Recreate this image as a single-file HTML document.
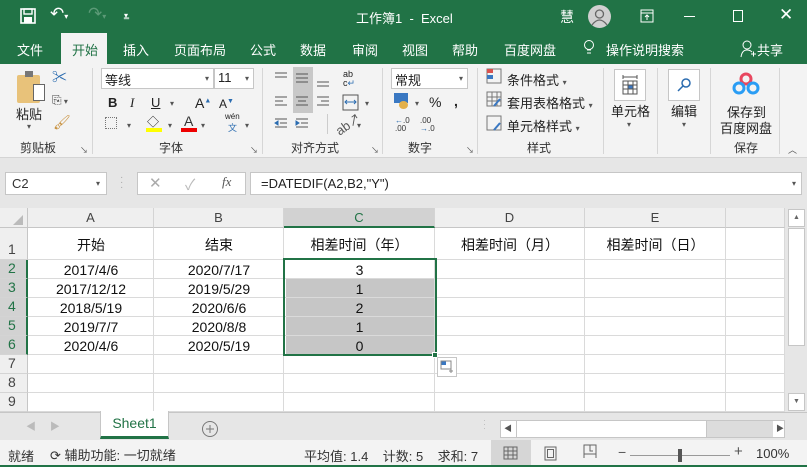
<!DOCTYPE html>
<html><head><meta charset="utf-8"><style>
*{margin:0;padding:0;box-sizing:border-box}
body{width:807px;height:467px;overflow:hidden;font-family:"Liberation Sans","Noto Sans CJK SC",sans-serif;background:#e6e6e6;position:relative;font-size:12px;color:#222}
.a{position:absolute}
.w{color:#fff}
.t{position:absolute;top:40px;color:#fff;font-size:13px}
.lab{position:absolute;top:139px;font-size:12px;color:#333}
.sep{position:absolute;top:68px;width:1px;height:86px;background:#d6d6d6}
.ch{position:absolute;top:208px;height:20px;text-align:center;line-height:20px;font-size:13px;color:#444;border-right:1px solid #d4d4d4;border-bottom:1px solid #c6c6c6;background:#efefef}
.rh{position:absolute;left:0;width:28px;text-align:left;padding-left:8px;font-size:14px;color:#444;background:#efefef;border-bottom:1px solid #d4d4d4;border-right:1px solid #c6c6c6}
.hl{position:absolute;height:1px;background:#dadada;left:28px;width:757px}
.vl{position:absolute;width:1px;background:#dadada;top:228px;height:184px}
.c{position:absolute;text-align:center;font-size:14px;color:#111}
.dd{font-size:8px;color:#555}
</style></head><body>
<!-- title bar -->
<div class="a" style="left:0;top:0;width:807px;height:64px;background:#217346"></div>
<svg class="a" style="left:20px;top:8px" width="16" height="16"><rect x="1" y="1" width="14" height="14" fill="none" stroke="#fff" stroke-width="1.6"/><rect x="4" y="1" width="8" height="5" fill="none" stroke="#fff" stroke-width="1.4"/><rect x="4" y="9" width="8" height="6" fill="#fff"/></svg>
<div class="a w" style="left:50px;top:4px;font-size:17px">↶<span style="font-size:8px">▾</span></div>
<div class="a" style="left:88px;top:4px;font-size:17px;color:#5c9a77">↷<span style="font-size:8px">▾</span></div>
<div class="a w" style="left:124px;top:9px;font-size:9px">‗<br></div>
<div class="a w" style="left:124px;top:11px;font-size:8px">▾</div>
<div class="a w" style="left:356px;top:8px;font-size:13px">工作簿1&nbsp; -&nbsp; Excel</div>
<div class="a w" style="left:560px;top:7px;font-size:14px">慧</div>
<div class="a" style="left:588px;top:5px;width:23px;height:23px;border-radius:50%;background:#d0d0d0"></div>
<svg class="a" style="left:588px;top:5px" width="23" height="23"><circle cx="11.5" cy="9" r="4" fill="none" stroke="#666" stroke-width="1.3"/><path d="M4 20 Q11.5 10 19 20" fill="none" stroke="#666" stroke-width="1.3"/></svg>
<svg class="a" style="left:640px;top:9px" width="14" height="14"><rect x="1" y="1" width="12" height="12" fill="none" stroke="#fff"/><path d="M1 4H13M7 6V11M5 8L7 6L9 8" stroke="#fff" fill="none"/></svg>
<div class="a" style="left:684px;top:16px;width:11px;height:1px;background:#fff"></div>
<div class="a" style="left:733px;top:10px;width:10px;height:12px;border:1px solid #fff"></div>
<div class="a w" style="left:779px;top:5px;font-size:17px">✕</div>
<!-- tabs -->
<div class="t" style="left:17px">文件</div>
<div class="a" style="left:61px;top:33px;width:46px;height:32px;background:#f3f3f3"></div>
<div class="t" style="left:72px;color:#217346">开始</div>
<div class="t" style="left:123px">插入</div>
<div class="t" style="left:174px">页面布局</div>
<div class="t" style="left:250px">公式</div>
<div class="t" style="left:300px">数据</div>
<div class="t" style="left:352px">审阅</div>
<div class="t" style="left:402px">视图</div>
<div class="t" style="left:452px">帮助</div>
<div class="t" style="left:504px">百度网盘</div>
<svg class="a" style="left:583px;top:39px" width="12" height="18"><circle cx="6" cy="6" r="4.5" fill="none" stroke="#fff"/><path d="M4 11H8M4 14H8" stroke="#fff"/></svg>
<div class="t" style="left:606px">操作说明搜索</div>
<svg class="a" style="left:740px;top:40px" width="16" height="18"><circle cx="7" cy="5" r="4" fill="none" stroke="#fff"/><path d="M1 17Q2 10 7 10Q10 10 12 12M11 14H16M13.5 11.5V16.5" stroke="#fff" fill="none"/></svg>
<div class="t" style="left:757px">共享</div>
<!-- ribbon -->
<div class="a" style="left:0;top:64px;width:807px;height:94px;background:#f3f3f3;border-bottom:1px solid #d4d4d4"></div>
<div class="sep" style="left:92px"></div><div class="sep" style="left:262px"></div><div class="sep" style="left:382px"></div><div class="sep" style="left:477px"></div><div class="sep" style="left:603px"></div><div class="sep" style="left:657px"></div><div class="sep" style="left:710px"></div><div class="sep" style="left:779px"></div>
<!-- clipboard -->
<div class="a" style="left:17px;top:75px;width:23px;height:28px;background:#e8c27a;border-radius:2px"></div>
<div class="a" style="left:25px;top:71px;width:8px;height:6px;background:#777"></div>
<div class="a" style="left:33px;top:84px;width:12px;height:17px;background:#fff;border:1px solid #666"></div>
<div class="a" style="left:16px;top:104px;font-size:13px">粘贴</div>
<div class="a dd" style="left:27px;top:122px">▾</div>
<div class="a" style="left:52px;top:66px;font-size:15px;color:#2b6cb0">✂</div>
<div class="a" style="left:52px;top:93px;font-size:12px;color:#444">⎘<span class="dd"> ▾</span></div>
<div class="a" style="left:53px;top:114px;font-size:14px;color:#c8903c">🖌</div>
<div class="lab" style="left:20px">剪贴板</div><div class="a dd" style="left:80px;top:145px">↘</div>
<!-- font -->
<div class="a" style="left:101px;top:68px;width:113px;height:21px;background:#fff;border:1px solid #c6c6c6;font-size:13px;padding:1px 3px">等线<span class="dd a" style="right:4px;top:5px">▾</span></div>
<div class="a" style="left:214px;top:68px;width:40px;height:21px;background:#fff;border:1px solid #c6c6c6;font-size:13px;padding:1px 3px">11<span class="dd a" style="right:4px;top:5px">▾</span></div>
<div class="a" style="left:108px;top:95px;font-weight:bold;font-size:13px">B</div>
<div class="a" style="left:130px;top:95px;font-style:italic;font-size:13px;font-family:'Liberation Serif'">I</div>
<div class="a" style="left:151px;top:95px;text-decoration:underline;font-size:13px">U</div><div class="a dd" style="left:170px;top:99px">▾</div>
<div class="a" style="left:195px;top:95px;font-size:14px">A<sup style="font-size:7px;color:#2b6cb0">▲</sup></div>
<div class="a" style="left:219px;top:97px;font-size:12px">A<sup style="font-size:7px;color:#2b6cb0">▼</sup></div>
<div class="a" style="left:105px;top:117px;width:12px;height:12px;border:1px dotted #777"></div><div class="a dd" style="left:127px;top:121px">▾</div>
<div class="a" style="left:147px;top:113px;font-size:12px">◇</div><div class="a" style="left:146px;top:128px;width:16px;height:4px;background:#ff0"></div><div class="a dd" style="left:168px;top:121px">▾</div>
<div class="a" style="left:184px;top:113px;font-size:14px;color:#333">A</div><div class="a" style="left:181px;top:128px;width:16px;height:4px;background:#e00"></div><div class="a dd" style="left:201px;top:121px">▾</div>
<div class="a" style="left:225px;top:112px;font-size:8px">wén<br><span style="font-size:9px;color:#2b6cb0;padding-left:3px">文</span></div><div class="a dd" style="left:245px;top:121px">▾</div>
<div class="lab" style="left:159px">字体</div><div class="a dd" style="left:250px;top:145px">↘</div>
<!-- align -->
<div class="a" style="left:293px;top:67px;width:20px;height:46px;background:#c8c8c8"></div>
<svg class="a" style="left:272px;top:70px" width="60" height="62" stroke="#555" fill="none"><path d="M3 3H15M3 7H15M24 4H36M24 8H36M24 12H36M45 12H57M45 16H57M3 27H15M3 31H11M3 35H15M24 27H36M26 31H34M24 35H36M45 27H57M49 31H57M45 35H57"/><path d="M3 49H15M8 53H15M3 57H15" /><path d="M3 53L6 51V55Z" fill="#2b6cb0" stroke="#2b6cb0"/><path d="M24 49H36M29 53H36M24 57H36"/><path d="M24 51L27 53L24 55Z" fill="#2b6cb0" stroke="#2b6cb0"/></svg>
<div class="a" style="left:343px;top:70px;font-size:9px;line-height:9px">ab<br>c<span style="color:#2b6cb0">↵</span></div>
<svg class="a" style="left:342px;top:94px" width="20" height="18"><rect x="1" y="1" width="15" height="15" fill="none" stroke="#555"/><path d="M3 8H14M5 6L3 8L5 10M12 6L14 8L12 10" stroke="#2b6cb0" fill="none"/></svg><div class="a dd" style="left:365px;top:99px">▾</div>
<div class="a" style="left:327px;top:114px;width:1px;height:20px;background:#ccc"></div>
<div class="a" style="left:334px;top:114px;font-size:13px;color:#555;transform:rotate(-35deg)">ab↗</div><div class="a dd" style="left:357px;top:121px">▾</div>
<div class="lab" style="left:291px">对齐方式</div><div class="a dd" style="left:371px;top:145px">↘</div>
<!-- number -->
<div class="a" style="left:391px;top:68px;width:77px;height:21px;background:#fff;border:1px solid #c6c6c6;font-size:13px;padding:1px 3px">常规<span class="dd a" style="right:4px;top:5px">▾</span></div>
<div class="a" style="left:394px;top:93px;width:14px;height:10px;background:#3a78c2"></div><div class="a" style="left:399px;top:101px;width:9px;height:8px;border-radius:50%;background:#e3b04b"></div>
<div class="a dd" style="left:415px;top:99px">▾</div>
<div class="a" style="left:429px;top:94px;font-size:14px">%</div>
<div class="a" style="left:454px;top:93px;font-size:14px;font-weight:bold">,</div>
<div class="a" style="left:395px;top:117px;font-size:8px;line-height:8px;color:#333"><span style="color:#2b6cb0">←</span>.0<br>.00</div>
<div class="a" style="left:420px;top:117px;font-size:8px;line-height:8px;color:#333">.00<br><span style="color:#2b6cb0">→</span>.0</div>
<div class="lab" style="left:408px">数字</div><div class="a dd" style="left:466px;top:145px">↘</div>
<!-- styles -->
<svg class="a" style="left:486px;top:68px" width="18" height="70" fill="none" stroke="#777"><rect x="1" y="1" width="14" height="14"/><rect x="1" y="1" width="6" height="4" fill="#d9534f" stroke="none"/><rect x="1" y="7" width="6" height="4" fill="#3a78c2" stroke="none"/><rect x="1" y="24" width="14" height="14"/><path d="M1 29H15M1 33H15M6 24V38M11 24V38"/><path d="M8 38L14 31" stroke="#3a78c2" stroke-width="2"/><rect x="1" y="48" width="14" height="14"/><path d="M8 62L14 55" stroke="#3a78c2" stroke-width="2"/></svg>
<div class="a" style="left:507px;top:70px;font-size:13px">条件格式 <span class="dd">▾</span></div>
<div class="a" style="left:507px;top:93px;font-size:13px">套用表格格式 <span class="dd">▾</span></div>
<div class="a" style="left:507px;top:116px;font-size:13px">单元格样式 <span class="dd">▾</span></div>
<div class="lab" style="left:527px">样式</div>
<!-- cells / edit / save -->
<div class="a" style="left:614px;top:69px;width:32px;height:32px;background:#fff;border:1px solid #c6c6c6"></div>
<svg class="a" style="left:620px;top:74px" width="20" height="22" fill="none" stroke="#555"><path d="M3 3H17M3 1V5M17 1V5"/><rect x="3" y="7" width="14" height="13"/><path d="M3 11H17M3 15H17M8 7V20M13 7V20"/><rect x="8" y="11" width="5" height="4" fill="#3a78c2"/></svg>
<div class="a" style="left:611px;top:101px;font-size:13px">单元格</div><div class="a dd" style="left:627px;top:120px">▾</div>
<div class="a" style="left:668px;top:69px;width:32px;height:32px;background:#fff;border:1px solid #c6c6c6"></div>
<svg class="a" style="left:675px;top:76px" width="18" height="18" fill="none" stroke="#2b6cb0" stroke-width="1.5"><circle cx="11" cy="7" r="4"/><path d="M8 10L3 15"/></svg>
<div class="a" style="left:671px;top:101px;font-size:13px">编辑</div><div class="a dd" style="left:682px;top:120px">▾</div>
<svg class="a" style="left:731px;top:71px" width="30" height="26"><circle cx="15" cy="8" r="5" fill="none" stroke="#e8475f" stroke-width="3"/><circle cx="8" cy="17" r="5" fill="none" stroke="#2a9df4" stroke-width="3"/><circle cx="22" cy="17" r="5" fill="none" stroke="#2a9df4" stroke-width="3"/></svg>
<div class="a" style="left:727px;top:102px;font-size:13px">保存到</div>
<div class="a" style="left:720px;top:118px;font-size:13px">百度网盘</div>
<div class="lab" style="left:734px">保存</div>
<div class="a" style="left:788px;top:143px;font-size:9px;color:#555">︿</div>
<!-- formula bar -->
<div class="a" style="left:5px;top:172px;width:102px;height:23px;background:#fff;border:1px solid #c6c6c6;font-size:13px;padding:3px 6px;color:#333">C2<span class="dd a" style="right:6px;top:6px">▾</span></div>
<div class="a" style="left:120px;top:175px;font-size:10px;color:#aaa;line-height:5px">·<br>·<br>·</div>
<div class="a" style="left:137px;top:172px;width:109px;height:23px;background:#fff;border:1px solid #c6c6c6"></div>
<div class="a" style="left:149px;top:174px;font-size:15px;color:#aaa">✕</div>
<div class="a" style="left:185px;top:174px;font-size:15px;color:#bbb">✓</div>
<div class="a" style="left:222px;top:174px;font-size:13px;font-style:italic;font-family:'Liberation Serif';color:#555">fx</div>
<div class="a" style="left:250px;top:172px;width:552px;height:23px;background:#fff;border:1px solid #c6c6c6;font-size:13px;padding:3px 10px;color:#222">=DATEDIF(A2,B2,"Y")<span class="dd a" style="right:5px;top:6px">▾</span></div>
<!-- grid -->
<div class="a" style="left:28px;top:228px;width:757px;height:184px;background:#fff"></div>
<div class="a" style="left:0;top:208px;width:28px;height:20px;background:#efefef;border-right:1px solid #c6c6c6;border-bottom:1px solid #c6c6c6"></div>
<svg class="a" style="left:12px;top:214px" width="12" height="12"><path d="M11 1V11H1Z" fill="#bbb"/></svg>
<div class="ch" style="left:28px;width:126px">A</div>
<div class="ch" style="left:154px;width:130px">B</div>
<div class="ch" style="left:284px;width:151px;background:#d2d2d2;color:#217346;border-bottom:2px solid #217346">C</div>
<div class="ch" style="left:435px;width:150px">D</div>
<div class="ch" style="left:585px;width:141px">E</div>
<div class="ch" style="left:726px;width:59px"></div>
<div class="rh" style="top:228px;height:32px;padding-top:13px">1</div>
<div class="rh" style="top:260px;height:19px;background:#d2d2d2;color:#217346;border-right:2px solid #217346">2</div>
<div class="rh" style="top:279px;height:19px;background:#d2d2d2;color:#217346;border-right:2px solid #217346">3</div>
<div class="rh" style="top:298px;height:19px;background:#d2d2d2;color:#217346;border-right:2px solid #217346">4</div>
<div class="rh" style="top:317px;height:19px;background:#d2d2d2;color:#217346;border-right:2px solid #217346">5</div>
<div class="rh" style="top:336px;height:19px;background:#d2d2d2;color:#217346;border-right:2px solid #217346">6</div>
<div class="rh" style="top:355px;height:19px">7</div>
<div class="rh" style="top:374px;height:19px">8</div>
<div class="rh" style="top:393px;height:19px">9</div>
<div class="a" style="left:286px;top:279px;width:148px;height:76px;background:#c6c6c6"></div>
<div class="hl" style="top:259px"></div><div class="hl" style="top:278px"></div><div class="hl" style="top:297px"></div><div class="hl" style="top:316px"></div><div class="hl" style="top:335px"></div><div class="hl" style="top:354px"></div><div class="hl" style="top:373px"></div><div class="hl" style="top:392px"></div><div class="hl" style="top:411px"></div>
<div class="vl" style="left:153px"></div><div class="vl" style="left:283px"></div><div class="vl" style="left:434px"></div><div class="vl" style="left:584px"></div><div class="vl" style="left:725px"></div><div class="vl" style="left:784px"></div>
<div class="c" style="left:28px;width:126px;top:235px">开始</div>
<div class="c" style="left:154px;width:130px;top:235px">结束</div>
<div class="c" style="left:284px;width:151px;top:235px">相差时间（年）</div>
<div class="c" style="left:435px;width:150px;top:235px">相差时间（月）</div>
<div class="c" style="left:585px;width:141px;top:235px">相差时间（日）</div>
<div class="c" style="left:28px;width:126px;top:262px;line-height:17px">2017/4/6<br><span style="position:relative;top:2px">2017/12/12</span><br><span style="position:relative;top:4px">2018/5/19</span><br><span style="position:relative;top:6px">2019/7/7</span><br><span style="position:relative;top:8px">2020/4/6</span></div>
<div class="c" style="left:154px;width:130px;top:262px;line-height:17px">2020/7/17<br><span style="position:relative;top:2px">2019/5/29</span><br><span style="position:relative;top:4px">2020/6/6</span><br><span style="position:relative;top:6px">2020/8/8</span><br><span style="position:relative;top:8px">2020/5/19</span></div>
<div class="c" style="left:284px;width:151px;top:262px;line-height:17px">3<br><span style="position:relative;top:2px">1</span><br><span style="position:relative;top:4px">2</span><br><span style="position:relative;top:6px">1</span><br><span style="position:relative;top:8px">0</span></div>
<div class="a" style="left:283px;top:258px;width:154px;height:98px;border:2px solid #217346"></div>
<div class="a" style="left:432px;top:352px;width:6px;height:6px;background:#217346;border:1px solid #fff"></div>
<div class="a" style="left:437px;top:357px;width:20px;height:20px;background:#fff;border:1px solid #c6c6c6"></div>
<svg class="a" style="left:440px;top:360px" width="14" height="14"><rect x="1" y="1" width="5" height="4" fill="#3a78c2"/><rect x="1" y="1" width="10" height="8" fill="none" stroke="#888"/><path d="M9 11H13M11 9V13" stroke="#888"/></svg>
<!-- vscroll -->
<div class="a" style="left:786px;top:208px;width:20px;height:204px;background:#e6e6e6"></div>
<div class="a" style="left:788px;top:209px;width:17px;height:18px;background:#fff;border:1px solid #c6c6c6;font-size:7px;text-align:center;line-height:16px;color:#666">▲</div>
<div class="a" style="left:788px;top:228px;width:17px;height:118px;background:#fff;border:1px solid #c6c6c6"></div>
<div class="a" style="left:788px;top:393px;width:17px;height:18px;background:#fff;border:1px solid #c6c6c6;font-size:7px;text-align:center;line-height:16px;color:#666">▼</div>
<!-- sheet tabs -->
<div class="a" style="left:0;top:412px;width:807px;height:28px;background:#e6e6e6;border-top:1px solid #c6c6c6"></div>
<div class="a" style="left:26px;top:418px;font-size:10px;color:#bbb">◀&nbsp;&nbsp;&nbsp;&nbsp;&nbsp;▶</div>
<div class="a" style="left:100px;top:411px;width:69px;height:28px;background:#fff;border:1px solid #c6c6c6;border-top:none;border-bottom:3px solid #217346;color:#217346;font-size:14px;text-align:center;line-height:24px">Sheet1</div>
<svg class="a" style="left:201px;top:420px" width="18" height="18"><circle cx="9" cy="9" r="7.5" fill="none" stroke="#777"/><path d="M5 9H13M9 5V13" stroke="#777"/></svg>
<div class="a" style="left:483px;top:418px;font-size:9px;color:#bbb;line-height:4px">·<br>·<br>·</div>
<div class="a" style="left:500px;top:420px;width:285px;height:18px;background:#fff;border:1px solid #c6c6c6"></div>
<div class="a" style="left:516px;top:421px;width:191px;height:16px;border-left:1px solid #c6c6c6;border-right:1px solid #c6c6c6;background:#fff"></div>
<div class="a" style="left:707px;top:421px;width:66px;height:16px;background:#dcdcdc"></div>
<div class="a" style="left:504px;top:423px;font-size:8px;color:#555">◀</div>
<div class="a" style="left:776px;top:423px;font-size:8px;color:#555">▶</div>
<!-- status bar -->
<div class="a" style="left:0;top:440px;width:807px;height:27px;background:#f3f3f3;border-bottom:2px solid #217346"></div>
<div class="a" style="left:8px;top:446px;font-size:13px;color:#333">就绪</div>
<div class="a" style="left:50px;top:445px;font-size:13px;color:#333">⟳ 辅助功能: 一切就绪</div>
<div class="a" style="left:304px;top:446px;font-size:13px;color:#333">平均值: 1.4&nbsp;&nbsp;&nbsp; 计数: 5&nbsp;&nbsp;&nbsp; 求和: 7</div>
<div class="a" style="left:491px;top:440px;width:40px;height:25px;background:#d6d6d6"></div>
<svg class="a" style="left:503px;top:446px" width="16" height="14" fill="none" stroke="#666"><rect x="1" y="1" width="13" height="12"/><path d="M1 5H14M1 9H14M5 1V13M10 1V13"/></svg>
<svg class="a" style="left:544px;top:446px" width="14" height="15" fill="none" stroke="#666"><rect x="1" y="1" width="11" height="13"/><rect x="3.5" y="3.5" width="6" height="8"/></svg>
<svg class="a" style="left:583px;top:444px" width="14" height="15" fill="none" stroke="#666"><path d="M1 1H13V10H1ZM1 10V14M13 10V14M7 1V7H10"/></svg>
<div class="a" style="left:618px;top:444px;font-size:14px;color:#555">−</div>
<div class="a" style="left:630px;top:455px;width:100px;height:1px;background:#999"></div>
<div class="a" style="left:678px;top:449px;width:4px;height:13px;background:#555"></div>
<div class="a" style="left:734px;top:443px;font-size:15px;color:#555">+</div>
<div class="a" style="left:756px;top:446px;font-size:13px;color:#333">100%</div>
</body></html>
